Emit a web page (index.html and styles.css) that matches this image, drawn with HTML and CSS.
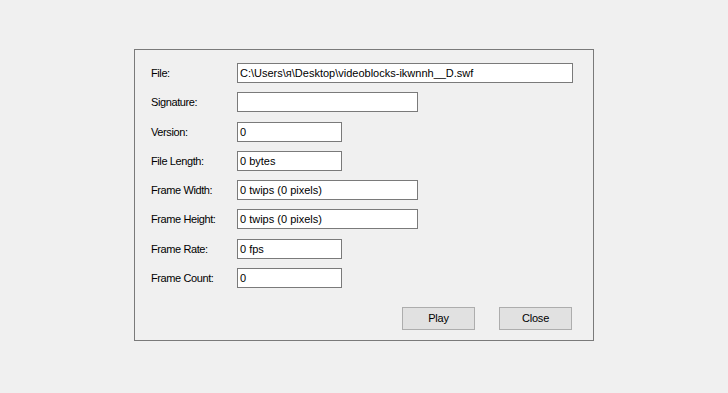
FILE: index.html
```html
<!DOCTYPE html>
<html lang="en">
<head>
    <meta charset="UTF-8">
    <meta name="viewport" content="width=device-width, initial-scale=1.0">
    <title>SWF Info</title>
    <link rel="stylesheet" href="styles.css">
</head>
<body>
    <div class="dialog">
        <div class="fields">
            <div class="row">
                <label>File:</label>
                <div class="box wide">C:\Users\я\Desktop\videoblocks-ikwnnh__D.swf</div>
            </div>
            <div class="row">
                <label>Signature:</label>
                <div class="box mid"></div>
            </div>
            <div class="row">
                <label>Version:</label>
                <div class="box short">0</div>
            </div>
            <div class="row">
                <label>File Length:</label>
                <div class="box short">0 bytes</div>
            </div>
            <div class="row">
                <label>Frame Width:</label>
                <div class="box mid">0 twips (0 pixels)</div>
            </div>
            <div class="row">
                <label>Frame Height:</label>
                <div class="box mid">0 twips (0 pixels)</div>
            </div>
            <div class="row">
                <label>Frame Rate:</label>
                <div class="box short">0 fps</div>
            </div>
            <div class="row">
                <label>Frame Count:</label>
                <div class="box short">0</div>
            </div>
        </div>

        <div class="buttons">
            <button>Play</button>
            <button>Close</button>
        </div>
    </div>
</body>
</html>
```

FILE: styles.css
```css
* {
    margin: 0;
    padding: 0;
    box-sizing: border-box;
    font-family: 'Liberation Sans', Arial, sans-serif;
}

body {
    background: #f0f0f0;
    color: #000;
    font-size: 11px;
    padding-top: 49px;
}

.dialog {
    width: 460px;
    height: 292px;
    margin: 0 auto;
    border: 1px solid #7a7a7a;
    padding: 13px 19px 0 16px;
}

.fields {
    display: flex;
    flex-direction: column;
    gap: 9.29px;
}

.row {
    display: flex;
    align-items: center;
    height: 20px;
}

.row label {
    width: 86px;
    letter-spacing: -0.4px;
}

.box {
    height: 20px;
    background: #fff;
    border: 1px solid #7a7a7a;
    padding: 0 2px;
    line-height: 18px;
    white-space: nowrap;
    overflow: hidden;
}

.wide {
    width: 336px;
}

.mid {
    width: 181px;
}

.short {
    width: 105px;
}

.buttons {
    display: flex;
    justify-content: flex-end;
    gap: 24px;
    margin-top: 19px;
    padding-right: 2px;
}

.buttons button {
    width: 73px;
    height: 23px;
    background: #e1e1e1;
    border: 1px solid #adadad;
    font-size: 11px;
    letter-spacing: -0.2px;
    color: #000;
}
```
